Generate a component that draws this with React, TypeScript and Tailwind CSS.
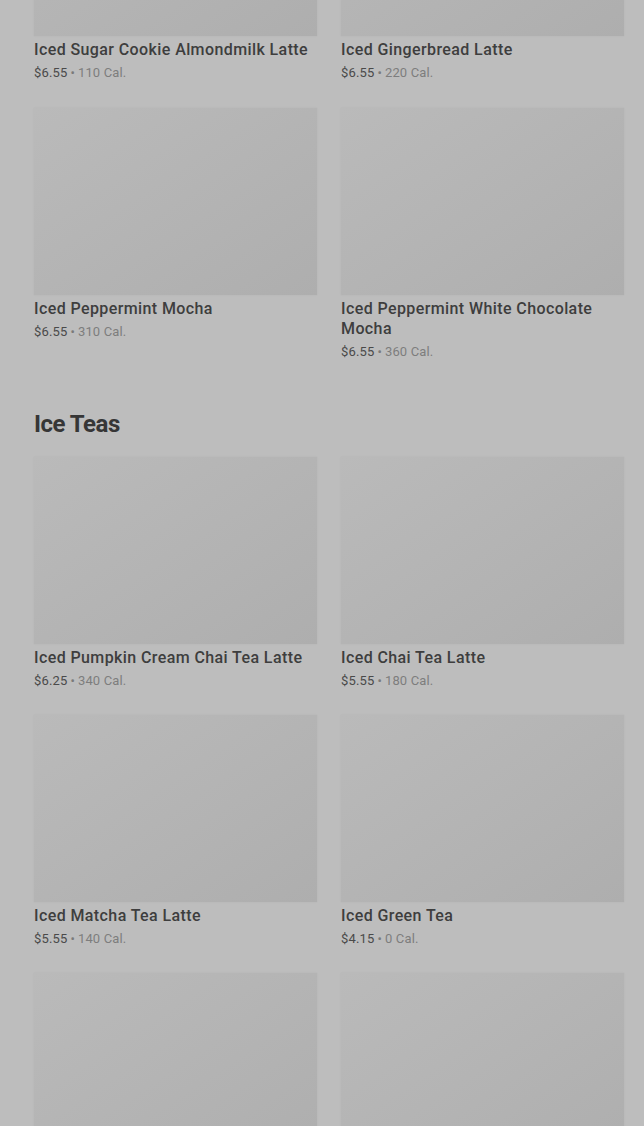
import React from 'react';

type Drink = { name: string; price: string; cal: number };

const LATTES: Drink[] = [
  { name: 'Iced Sugar Cookie Almondmilk Latte', price: '$6.55', cal: 110 },
  { name: 'Iced Gingerbread Latte', price: '$6.55', cal: 220 },
  { name: 'Iced Peppermint Mocha', price: '$6.55', cal: 310 },
  { name: 'Iced Peppermint White Chocolate Mocha', price: '$6.55', cal: 360 },
];

const TEAS: Drink[] = [
  { name: 'Iced Pumpkin Cream Chai Tea Latte', price: '$6.25', cal: 340 },
  { name: 'Iced Chai Tea Latte', price: '$5.55', cal: 180 },
  { name: 'Iced Matcha Tea Latte', price: '$5.55', cal: 140 },
  { name: 'Iced Green Tea', price: '$4.15', cal: 0 },
];

function DrinkImage() {
  return <div className="h-[187px] w-full bg-linear-to-br from-[#bababa] to-[#aeaeae] shadow-[0_0_2px_rgba(0,0,0,0.06)]" />;
}

function DrinkCard({ drink }: { drink: Drink }) {
  return (
    <div className="flex flex-col">
      <DrinkImage />
      <div className="mt-1 text-[16px] leading-[20px] font-medium tracking-[0.4px] text-[#3e3e3e]">{drink.name}</div>
      <div className="mt-1 text-[13px] leading-[18px] tracking-[0.15px]">
        <span className="text-[#4a4a4a]">{drink.price}</span>
        <span className="mx-[3px] text-[#7a7a7a]">•</span>
        <span className="text-[#7d7d7d]">{drink.cal} Cal.</span>
      </div>
    </div>
  );
}

export default function App() {
  return (
    <div className="h-[1126px] overflow-hidden bg-[#bdbdbd] font-['Roboto','Liberation_Sans',sans-serif]">
      <div className="-mt-[151px] pl-[34px] pr-[20px] pb-10">
        <div className="grid grid-cols-2 gap-x-6 gap-y-[26px]">
          {LATTES.map((d) => (
            <DrinkCard key={d.name} drink={d} />
          ))}
        </div>

        <h2 className="mt-[49px] mb-[19px] text-[24px] leading-[28px] font-bold tracking-[-0.5px] text-[#363636]">
          Ice Teas
        </h2>
        <div className="grid grid-cols-2 gap-x-6 gap-y-[25px]">
          {TEAS.map((d) => (
            <DrinkCard key={d.name} drink={d} />
          ))}
          {/* next row, still loading below the fold */}
          <DrinkImage />
          <DrinkImage />
        </div>
      </div>
    </div>
  );
}
